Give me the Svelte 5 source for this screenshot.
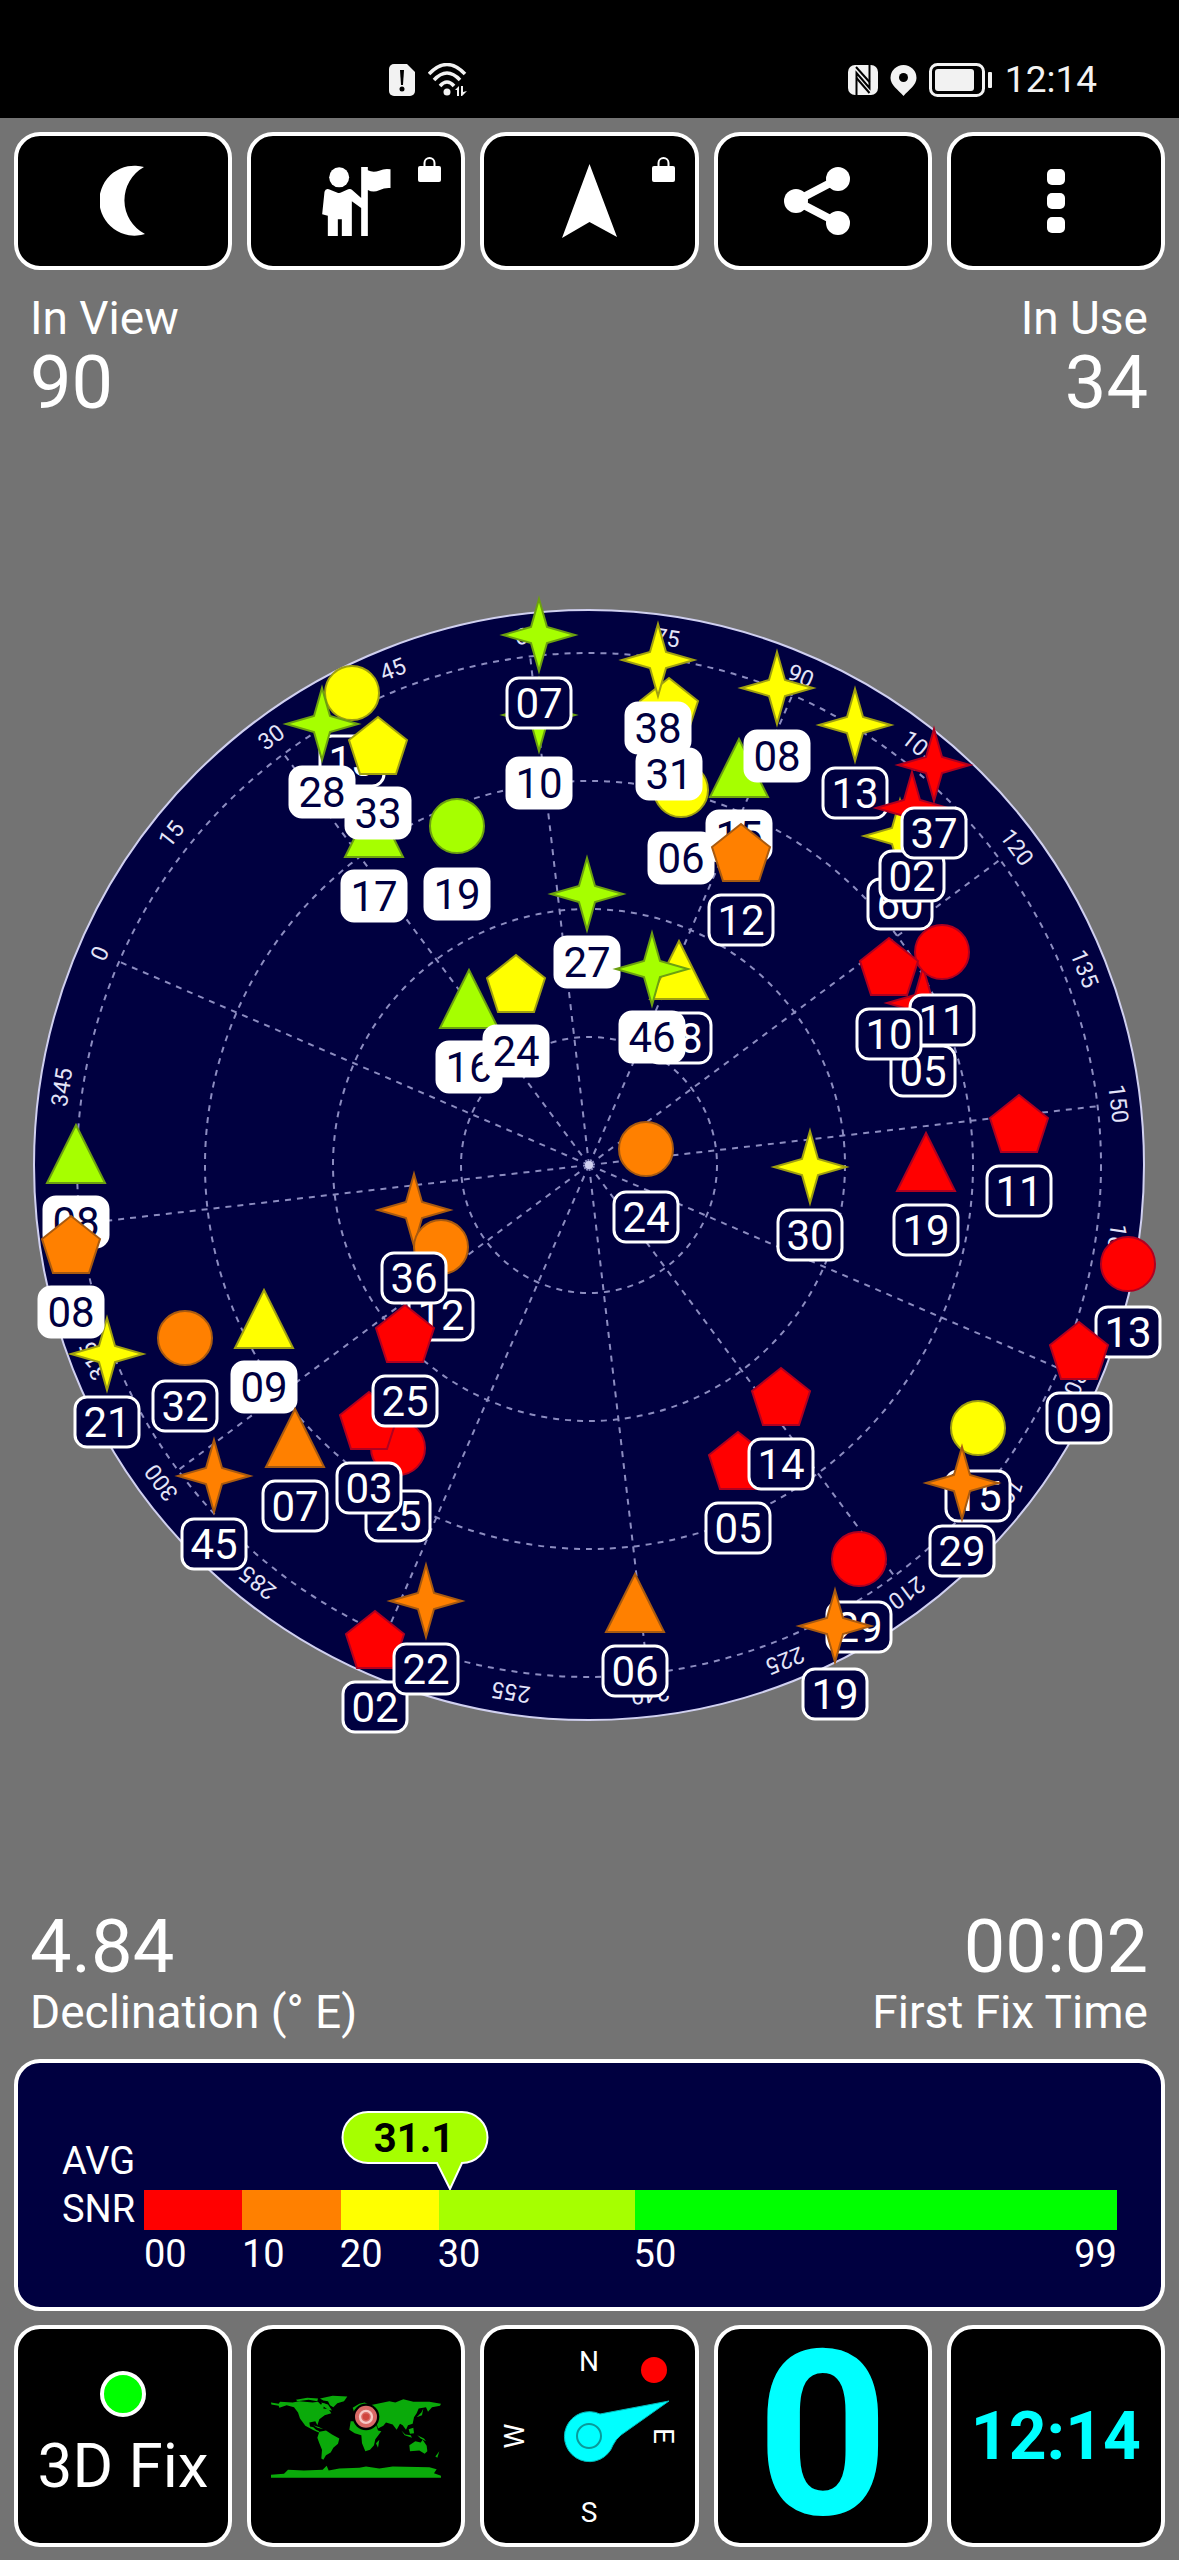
<script lang="ts">
    type Shape = "star" | "circle" | "pentagon" | "triangle";
    type Level = "red" | "orange" | "yellow" | "lime";

    interface Satellite {
        id: string;
        shape: Shape;
        level: Level;
        x: number;
        y: number;
        used?: boolean;
        late?: boolean;
    }

    const heading = 66.6;
    const averageSnr = 31.1;
    const rings = [128, 256, 384, 512];
    const spokes = Array.from({ length: 12 }, (_, i) => i * 30 - heading);
    const ticks = Array.from({ length: 24 }, (_, i) => i * 15);

    const outlines: Record<string, string> = {
        star: "M0-36 8-8 36 0 8 8 0 36-8 8-36 0-8-8Z",
        pentagon: "M0-28 29-5 18 29H-18L-29-5Z",
        triangle: "M0-29 29 29H-29Z"
    };

    // x and y are measured from the zenith, later entries lie on top
    const satellites: Satellite[] = [
        { id: "13", shape: "circle", level: "yellow", x: -237, y: -472 },
        { id: "28", shape: "star", level: "lime", x: -267, y: -441, used: true, late: true },
        { id: "17", shape: "triangle", level: "lime", x: -215, y: -337, used: true },
        { id: "33", shape: "pentagon", level: "yellow", x: -211, y: -420, used: true, late: true },
        { id: "19", shape: "circle", level: "lime", x: -132, y: -339, used: true },
        { id: "10", shape: "star", level: "lime", x: -50, y: -450, used: true },
        { id: "07", shape: "star", level: "lime", x: -50, y: -530 },
        { id: "27", shape: "star", level: "lime", x: -2, y: -271, used: true },
        { id: "16", shape: "triangle", level: "lime", x: -120, y: -166, used: true },
        { id: "24", shape: "pentagon", level: "yellow", x: -73, y: -182, used: true },
        { id: "06", shape: "circle", level: "yellow", x: 92, y: -375, used: true },
        { id: "31", shape: "pentagon", level: "yellow", x: 80, y: -459, used: true, late: true },
        { id: "38", shape: "star", level: "yellow", x: 69, y: -505, used: true },
        { id: "15", shape: "triangle", level: "lime", x: 150, y: -397, used: true },
        { id: "08", shape: "star", level: "yellow", x: 188, y: -477, used: true },
        { id: "12", shape: "pentagon", level: "orange", x: 152, y: -313 },
        { id: "18", shape: "triangle", level: "yellow", x: 90, y: -195 },
        { id: "46", shape: "star", level: "lime", x: 63, y: -196, used: true },
        { id: "13", shape: "star", level: "yellow", x: 266, y: -440 },
        { id: "60", shape: "star", level: "yellow", x: 311, y: -329 },
        { id: "02", shape: "star", level: "red", x: 323, y: -357 },
        { id: "37", shape: "star", level: "red", x: 345, y: -400 },
        { id: "05", shape: "star", level: "red", x: 334, y: -162 },
        { id: "11", shape: "circle", level: "red", x: 353, y: -213 },
        { id: "10", shape: "pentagon", level: "red", x: 300, y: -199 },
        { id: "11", shape: "pentagon", level: "red", x: 430, y: -42 },
        { id: "19", shape: "triangle", level: "red", x: 337, y: -3 },
        { id: "30", shape: "star", level: "yellow", x: 221, y: 2 },
        { id: "24", shape: "circle", level: "orange", x: 57, y: -16 },
        { id: "13", shape: "circle", level: "red", x: 539, y: 99 },
        { id: "09", shape: "pentagon", level: "red", x: 490, y: 185 },
        { id: "15", shape: "circle", level: "yellow", x: 389, y: 263 },
        { id: "29", shape: "star", level: "orange", x: 373, y: 318 },
        { id: "29", shape: "circle", level: "red", x: 270, y: 394 },
        { id: "19", shape: "star", level: "orange", x: 246, y: 461 },
        { id: "05", shape: "pentagon", level: "red", x: 149, y: 295 },
        { id: "14", shape: "pentagon", level: "red", x: 192, y: 231 },
        { id: "06", shape: "triangle", level: "orange", x: 46, y: 438 },
        { id: "36", shape: "star", level: "orange", x: -175, y: 45, late: true },
        { id: "12", shape: "circle", level: "orange", x: -148, y: 82 },
        { id: "25", shape: "circle", level: "red", x: -191, y: 283 },
        { id: "03", shape: "pentagon", level: "red", x: -220, y: 255 },
        { id: "25", shape: "pentagon", level: "red", x: -184, y: 168 },
        { id: "08", shape: "triangle", level: "lime", x: -513, y: -11, used: true },
        { id: "21", shape: "star", level: "yellow", x: -482, y: 189 },
        { id: "08", shape: "pentagon", level: "orange", x: -518, y: 79, used: true },
        { id: "32", shape: "circle", level: "orange", x: -404, y: 173 },
        { id: "09", shape: "triangle", level: "yellow", x: -325, y: 154, used: true },
        { id: "07", shape: "triangle", level: "orange", x: -294, y: 273 },
        { id: "45", shape: "star", level: "orange", x: -375, y: 311 },
        { id: "02", shape: "pentagon", level: "red", x: -214, y: 474 },
        { id: "22", shape: "star", level: "orange", x: -163, y: 436 }
    ];
</script>

<svelte:head>
    <title>GPS Status</title>
</svelte:head>

{#snippet tag(sat: Satellite)}
    <g class="tag" class:used={sat.used} transform="translate({sat.x} {sat.y + 68})">
        <rect x="-32" y="-25" width="64" height="50" rx="12" />
        <text y="15">{sat.id}</text>
    </g>
{/snippet}

{#snippet lock()}
    <svg class="lock" viewBox="0 0 23 26" aria-hidden="true">
        <rect y="10" width="23" height="16" rx="2" />
        <path d="M6.500 11V7a5 5 0 0 1 10 0v4" fill="none" stroke="#fff" stroke-width="2" />
    </svg>
{/snippet}

<div class="screen">
    <header class="status">
        <div class="group">
            <svg width="27" height="34" viewBox="0 0 27 34" aria-hidden="true">
                <path d="M5 1h13l8 8v19a5 5 0 0 1-5 5H5a5 5 0 0 1-5-5V6a5 5 0 0 1 5-5Z" />
                <path d="M11 7h4l-1 15h-2Z" fill="#000" />
                <circle cx="13" cy="26" r="2.500" fill="#000" />
            </svg>
            <svg width="40" height="34" viewBox="0 0 40 34" aria-hidden="true">
                <g fill="none" stroke="#f2f2f2" stroke-width="3.500">
                    <path d="M1 11q18-19 36 0" />
                    <path d="M6 17q13-14 26 0" />
                    <path d="M12 23q7-8 14 0" />
                </g>
                <circle cx="19" cy="29" r="3.500" />
                <path d="M27 27l4-4v10h-2v-6ZM33 23h2v6l4-1-5 5h-1Z" />
            </svg>
        </div>
        <div class="group">
            <svg width="30" height="32" viewBox="0 0 30 32" aria-hidden="true">
                <rect x="0" y="1" width="30" height="30" rx="7" />
                <path d="M8.500 31V9L21.500 24V1" fill="none" stroke="#000" stroke-width="2" />
                <path d="M8 3l13.500 15" stroke="#000" stroke-width="2" />
                <path d="M8.500 14l13 15" stroke="#000" stroke-width="2" />
            </svg>
            <svg width="27" height="32" viewBox="0 0 27 32" aria-hidden="true">
                <path d="M13.500 1A13 13 0 0 0 .5 14c0 7 8 12 13 18 5-6 13-11 13-18a13 13 0 0 0-13-13Z" />
                <circle cx="13.500" cy="13.500" r="4.500" fill="#000" />
            </svg>
            <svg width="64" height="34" viewBox="0 0 64 34" aria-hidden="true">
                <rect x="1.500" y="1.500" width="53" height="31" rx="7" fill="none" stroke="#f2f2f2" stroke-width="3" />
                <rect x="6" y="6" width="39" height="22" rx="3" />
                <rect x="59" y="9" width="4" height="16" rx="1" />
            </svg>
            <time>12:14</time>
        </div>
    </header>

    <nav class="row top">
        <button aria-label="Night mode">
            <svg width="47" height="72" viewBox="-2 -1 47 72" aria-hidden="true">
                <path d="M42 1A35 35 0 1 0 43 68A38 38 0 0 1 42 1Z" />
            </svg>
        </button>
        <button aria-label="Guide">
            <svg width="69" height="69" viewBox="217 108 206 207" aria-hidden="true">
                <circle cx="268" cy="139" r="30" />
                <path d="M334 108h20v10q16 8 34 1 18-8 34-4v56q-16-2-34 7-18 8-34-1v138h-20v-84l-28-20v104h-30v-50h-12v50h-30v-61l-17-4 7-68q3-10 13-7l26 10q6 2 12-1l20-9q7-3 12 2l27 24Z" />
            </svg>
            {@render lock()}
        </button>
        <button aria-label="Navigate">
            <svg width="55" height="74" viewBox="0 0 55 74" aria-hidden="true">
                <path d="M27.500 0 55 73 27.500 58 0 74Z" />
            </svg>
            {@render lock()}
        </button>
        <button aria-label="Share">
            <svg width="80" height="70" viewBox="0 0 80 70" aria-hidden="true">
                <path d="M55 13 13 35l42 22" fill="none" stroke="#fff" stroke-width="8" />
                <circle cx="13" cy="35" r="12" />
                <circle cx="55" cy="13" r="12" />
                <circle cx="55" cy="57" r="12" />
            </svg>
        </button>
        <button aria-label="More">
            <svg width="18" height="64" viewBox="0 0 18 64" aria-hidden="true">
                <rect width="18" height="16" rx="5" />
                <rect y="24" width="18" height="16" rx="5" />
                <rect y="48" width="18" height="16" rx="5" />
            </svg>
        </button>
    </nav>

    <section class="stats above">
        <div>
            <p class="name">In View</p>
            <p class="value">90</p>
        </div>
        <div class="end">
            <p class="name">In Use</p>
            <p class="value">34</p>
        </div>
    </section>

    <svg class="sky" viewBox="-589 -745 1179 1490" role="img" aria-label="Satellites in view">
        <circle class="disc" r="555" />
        <g class="grid">
            {#each rings as r}
                <circle {r} />
            {/each}
            {#each spokes as angle}
                <path d="M0 0V-512" transform="rotate({angle})" />
            {/each}
        </g>
        <circle r="4" fill="#d0d0f0" />
        {#each ticks as tick}
            <text class="tick" y="-525" transform="rotate({tick - heading})">{tick}</text>
        {/each}
        {#each satellites as sat}
            {#if sat.shape === "circle"}
                <circle class="mark {sat.level}" cx={sat.x} cy={sat.y} r="27" />
            {:else}
                <path class="mark {sat.level}" d={outlines[sat.shape]} transform="translate({sat.x} {sat.y})" />
            {/if}
            {#if !sat.late}
                {@render tag(sat)}
            {/if}
        {/each}
        {#each satellites.filter((sat) => sat.late) as sat}
            {@render tag(sat)}
        {/each}
    </svg>

    <section class="stats">
        <div>
            <p class="value">4.84</p>
            <p class="name">Declination (° E)</p>
        </div>
        <div class="end">
            <p class="value">00:02</p>
            <p class="name">First Fix Time</p>
        </div>
    </section>

    <section class="snr">
        <div>AVG<br />SNR</div>
        <div class="scale">
            <svg class="bubble" style="left: {(averageSnr / 99) * 100}%" viewBox="0 0 148 80">
                <path d="M27 2H121A25.500 25.500 0 0 1 121 53L109 79 96 53H27A25.500 25.500 0 0 1 27 2Z" />
                <text x="73" y="42">{averageSnr}</text>
            </svg>
            <div class="bar">
                <i class="red"></i><i class="orange"></i><i class="yellow"></i><i class="lime"></i><i class="green"></i>
            </div>
            <div class="marks">
                <span>00</span><span>10</span><span>20</span><span>30</span><span>50</span><span>99</span>
            </div>
        </div>
    </section>

    <nav class="row bottom">
        <button class="fix">
            <span class="lamp"></span>
            <span>3D Fix</span>
        </button>
        <button aria-label="World map">
            <svg width="170" height="87" viewBox="65 40 510 260" aria-hidden="true">
                <g fill="#0aaa0a">
                    <path d="M65 68 88 72 92 66 130 68 150 64 190 68 206 66 214 74 226 70 222 86 238 88 246 100 226 106 210 118 204 136 198 124 180 128 182 140 192 142 200 150 210 154 208 158 190 150 168 138 152 116 146 98 134 82 112 76 90 84 88 78 66 74Z" />
                    <path d="M140 60 174 54 206 56 204 64 178 60 144 64ZM212 56 250 48 294 50 284 64 264 70 252 82 242 76 236 64 222 62ZM216 68 236 74 248 92 236 90 220 78Z" />
                    <path d="M210 156 230 152 248 164 270 176 266 192 252 204 244 218 230 226 222 240 216 236 218 210 210 190 204 174Z" />
                    <path d="M310 84 330 72 346 68 362 76 384 72 420 64 438 68 462 58 492 66 540 66 575 72 572 78 548 82 536 96 530 82 508 86 502 100 494 112 490 132 476 136 470 150 460 136 452 132 442 150 430 134 410 128 402 138 386 146 382 132 368 126 334 116 318 108Z" />
                    <path d="M304 124 334 124 362 130 380 134 386 152 396 154 378 178 374 196 362 210 348 214 338 190 336 166 316 160 300 150Z" />
                    <path d="M480 196 498 184 514 188 520 180 532 198 534 214 526 222 510 212 482 214Z" />
                    <path d="M65 285 104 282 116 270 164 272 220 270 232 258 238 272 270 266 330 264 350 260 390 266 430 260 540 262 562 268 554 280 575 288V294H65Z" />
                    <path d="M456 152 468 164 484 166 488 174 466 166ZM478 148 492 144 494 160 482 162ZM504 166 524 176 530 184 514 176ZM502 112 516 98 522 86 518 106ZM380 190 390 180 386 204ZM192 136 210 142 222 148 204 144ZM558 230 570 214 564 234Z" />
                </g>
                <circle cx="350" cy="111" r="40" fill="#000" />
                <circle cx="350" cy="111" r="33" fill="#d96a66" />
                <circle cx="350" cy="111" r="18" fill="#d96a66" stroke="#f7c9c7" stroke-width="7" />
                <circle cx="350" cy="111" r="10" fill="#d0453f" />
            </svg>
        </button>
        <button aria-label="Compass">
            <svg class="compass" width="200" height="200" viewBox="-100 -100 200 200" aria-hidden="true">
                <text y="-65">N</text>
                <text y="-65" transform="rotate(90)">E</text>
                <text y="86">S</text>
                <text y="-65" transform="rotate(-90)">W</text>
                <circle cx="65" cy="-66" r="13" fill="#f00" />
                <path d="M80-35 11-22A25 25 0 1 0 24 9Q27 3 32-1Z" fill="#0ff" stroke="#0bb" />
                <circle r="12" fill="none" stroke="#099a9a" stroke-width="2" />
            </svg>
        </button>
        <button class="speed">0</button>
        <button class="clock">12:14</button>
    </nav>
</div>

<style>
    :global(body) {
        margin: 0;
        background: #737373;
    }

    .screen {
        font-family: Roboto, "Liberation Sans", sans-serif;
        color: #fff;
        padding-bottom: 13px;
    }

    svg {
        display: block;
        fill: #fff;
    }

    p {
        margin: 0;
    }

    .status {
        display: flex;
        justify-content: space-between;
        box-sizing: border-box;
        height: 118px;
        padding: 43px 82px 0 33%;
        background: #000;
    }

    .group {
        display: flex;
        align-items: center;
        gap: 12px;
        height: 74px;
    }

    .status svg {
        fill: #f2f2f2;
    }

    .group time {
        font-size: 37px;
        line-height: 40px;
        color: #f2f2f2;
    }

    .row {
        display: grid;
        grid-template-columns: repeat(5, 1fr);
        gap: 15px;
        padding: 14px 14px 0;
    }

    button {
        position: relative;
        display: flex;
        align-items: center;
        justify-content: center;
        box-sizing: border-box;
        min-width: 0;
        padding: 0;
        border: 4px solid #fff;
        border-radius: 26px;
        background: #000;
        color: #fff;
        font-family: inherit;
    }

    .top button {
        height: 138px;
    }

    .bottom button {
        height: 222px;
    }

    .lock {
        position: absolute;
        top: 20px;
        right: 20px;
        width: 23px;
    }

    .stats {
        display: flex;
        justify-content: space-between;
        padding: 0 31px 0 30px;
    }

    .above {
        margin-top: 20px;
    }

    .end {
        text-align: right;
    }

    .name {
        font-size: 46px;
        line-height: 56px;
    }

    .value {
        font-size: 74px;
        line-height: 74px;
    }

    .sky {
        width: 100%;
        height: auto;
    }

    .disc {
        fill: #000040;
        stroke: #d0d0f0;
        stroke-width: 2;
    }

    .grid {
        fill: none;
        stroke: #8c8cc0;
        stroke-width: 2;
        stroke-dasharray: 6 6;
    }

    .tick {
        font-size: 23px;
        fill: #e4e4f8;
        text-anchor: middle;
    }

    .mark {
        stroke-width: 2;
    }

    .red {
        fill: #f00;
        stroke: #b00020;
        background: #f00;
    }

    .orange {
        fill: #ff8000;
        stroke: #a85a10;
        background: #ff8000;
    }

    .yellow {
        fill: #ff0;
        stroke: #a0a010;
        background: #ff0;
    }

    .lime {
        fill: #a6ff00;
        stroke: #6ca010;
        background: #a6ff00;
    }

    .green {
        background: #0f0;
    }

    .tag rect {
        fill: #000040;
        stroke: #fff;
        stroke-width: 3;
    }

    .tag text {
        font-size: 42px;
        text-anchor: middle;
    }

    .tag.used rect {
        fill: #fff;
    }

    .tag.used text {
        fill: #000040;
    }

    .snr {
        display: grid;
        grid-template-columns: 82px 1fr;
        margin: 19px 14px 0;
        padding: 74px 44px 29px;
        border: 4px solid #fff;
        border-radius: 26px;
        background: #000040;
        font-size: 38px;
        line-height: 48px;
    }

    .scale {
        position: relative;
        padding-top: 53px;
    }

    .bar,
    .marks {
        display: grid;
        grid-template-columns: 10fr 10fr 10fr 20fr 45fr 4fr;
    }

    .bar {
        height: 40px;
    }

    .bar .green {
        grid-column: span 2;
    }

    .marks span:last-child {
        justify-self: end;
    }

    .bubble {
        position: absolute;
        top: -27px;
        width: 148px;
        margin-left: -109px;
    }

    .bubble path {
        fill: #a6ff00;
        stroke: #fff;
        stroke-width: 2;
    }

    .bubble text {
        font-size: 40px;
        font-weight: 700;
        fill: #000;
        text-anchor: middle;
    }

    .bottom .fix {
        flex-direction: column;
        gap: 14px;
        font-size: 62px;
        line-height: 70px;
    }

    .lamp {
        box-sizing: border-box;
        width: 46px;
        height: 46px;
        border: 4px solid #fff;
        border-radius: 50%;
        background: #0f0;
    }

    .compass text {
        font-size: 28px;
        text-anchor: middle;
    }

    .speed {
        font-size: 230px;
        font-weight: 700;
        line-height: 214px;
        color: #0ff;
    }

    .clock {
        font-size: 66px;
        font-weight: 700;
        color: #0ff;
    }
</style>
